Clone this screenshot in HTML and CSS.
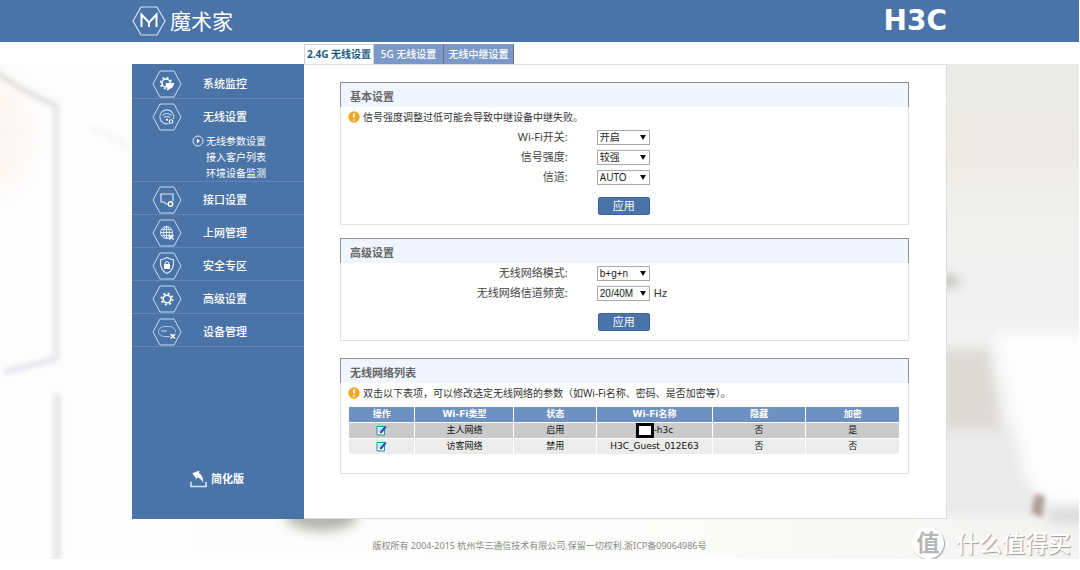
FILE: index.html
```html
<!DOCTYPE html>
<html lang="zh-CN">
<head>
<meta charset="utf-8">
<title>魔术家 - 无线设置</title>
<link rel="stylesheet" href="styles.css">
</head>
<body>
<svg class="defs" aria-hidden="true">
  <symbol id="hex" viewBox="0 0 30 28"><path d="M8 1h14l7 13-7 13H8L1 14z" fill="none" stroke="#c9dcf2" stroke-width="1"/></symbol>
  <symbol id="warn" viewBox="0 0 12 12"><circle cx="6" cy="6" r="5.7" fill="#f5a623"/><path d="M6 2.2v4.4M6 8.2v1.6" stroke="#fff" stroke-width="1.7"/></symbol>
  <symbol id="edit" viewBox="0 0 11 11"><path d="M1 1.5h7.5v8.500H1z" fill="#e8f6ff" stroke="#2c8f9b"/><path d="M2.500 4h3M2.500 6h2" stroke="#9cc"/><path d="M9.800 1.500L5 7.300" stroke="#1d54c4" stroke-width="2.200"/><path d="M3.800 8.600l.5-2 1.400 1.200z" fill="#222"/></symbol>
</svg>
<header class="topbar">
  <div class="topbar-inner">
    <div class="brand">
      <svg class="brand-mark" viewBox="0 0 34 30"><path d="M9 1h16l8 14-8 14H9L1 15z" fill="none" stroke="#d3e3f5" stroke-width="1.200"/><path d="M9.500 21V8.500l7.500 8 7.500-8V21M17 16v5" fill="none" stroke="#fff" stroke-width="2"/></svg>
      <span class="brand-name">魔术家</span>
    </div>
    <span class="maker">H3C</span>
  </div>
</header>
<div class="stage">
  <svg class="scene" viewBox="0 0 1079 495" preserveAspectRatio="none" aria-hidden="true">
    <defs>
      <filter id="b2" x="-50%" y="-50%" width="200%" height="200%"><feGaussianBlur stdDeviation="2.500"/></filter>
      <filter id="bv" filterUnits="userSpaceOnUse" x="-20" y="-20" width="180" height="540"><feGaussianBlur stdDeviation="2.500"/></filter>
      <filter id="b6" x="-50%" y="-50%" width="200%" height="200%"><feGaussianBlur stdDeviation="6"/></filter>
      <filter id="b14" x="-80%" y="-80%" width="260%" height="260%"><feGaussianBlur stdDeviation="14"/></filter>
      <linearGradient id="wall" x1="0" y1="0" x2="0" y2="1"><stop offset="0" stop-color="#ebebe9"/><stop offset=".2" stop-color="#edebe3"/><stop offset=".35" stop-color="#f0f0ee"/><stop offset=".65" stop-color="#f1f2f3"/><stop offset="1" stop-color="#f2f2f0"/></linearGradient>
      <linearGradient id="floor" x1="0" y1="0" x2="1" y2="0"><stop offset="0" stop-color="#fdfdfd"/><stop offset=".6" stop-color="#fcfcfb"/><stop offset="1" stop-color="#f3f3f1"/></linearGradient>
    </defs>
    <rect width="1079" height="495" fill="url(#floor)"/>
    <rect x="940" width="139" height="455" fill="url(#wall)"/>
    <ellipse cx="0" cy="70" rx="26" ry="56" fill="#fdf5ef" filter="url(#b14)"/>
    <g filter="url(#bv)" fill="none">
      <path d="M-4 8Q30 32 58 42" stroke="#dededc" stroke-width="5"/>
      <path d="M56 44V294" stroke="#e9e9eb" stroke-width="8"/>
      <path d="M4 308L56 295" stroke="#e2e4ec" stroke-width="5"/>
      <path d="M57 330V500" stroke="#e8e8ea" stroke-width="8"/>
      <path d="M92 62l40 22" stroke="#f6f6f4" stroke-width="5"/>
    </g>
    <ellipse cx="322" cy="452" rx="36" ry="15" fill="#b4b5aa" filter="url(#b6)"/>
    <g filter="url(#b6)">
      <path d="M940 285h48l14 80h-62z" fill="#dddad4"/>
      <path d="M940 365h80l40 85H940z" fill="#eaeaea"/>
      <path d="M1050 435h40v25h-40z" fill="#dcdcdc"/>
      <path d="M994 270h100v172h-40q-30-10-36-60z" fill="#fdfdfd"/>
      <ellipse cx="948" cy="217" rx="12" ry="4" fill="#a9a79c"/>
    </g>
    <path d="M1031 448l4-18 10 2-3 22z" fill="#b09f99" filter="url(#b2)"/>
  </svg>

  <nav class="tabs" aria-label="无线设置">
    <a class="tab tab-active" href="#">2.4G 无线设置</a>
    <a class="tab" href="#">5G 无线设置</a>
    <a class="tab" href="#">无线中继设置</a>
  </nav>

  <div class="shell">
    <nav class="sidebar" aria-label="主菜单">
      <ul class="menu">
        <li><a class="menu-link" href="#"><svg class="menu-icon" viewBox="0 0 30 28"><use href="#hex"/><circle cx="14" cy="13" r="4" fill="none" stroke="#fff" stroke-width="1.400"/><circle cx="14" cy="13" r="5.400" fill="none" stroke="#fff" stroke-width="1.800" stroke-dasharray="1.800 2.440"/><path d="M14 13h8q0 5-4.500 6-1 2-3 1l1-2-2-3z" fill="#fff"/></svg>系统监控</a></li>
        <li><a class="menu-link" href="#"><svg class="menu-icon" viewBox="0 0 30 28"><use href="#hex"/><g fill="none" stroke="#c9dcf2" stroke-width="1.100"><path d="M17 20.500A7 7 0 1 1 21.500 16M10.500 12.500q4.500-4 9 0M12.200 14.700q2.800-2.400 5.600 0"/><circle cx="19" cy="18.500" r="1.800" stroke="#fff"/></g><circle cx="15" cy="16.700" r="1.100" fill="#fff"/></svg>无线设置</a>
          <ul class="submenu">
            <li><a class="submenu-link" href="#"><svg class="submenu-dot" viewBox="0 0 12 12"><circle cx="6" cy="6" r="5" fill="none" stroke="#dce8f6"/><path d="M4.800 3.500L8 6 4.800 8.500z" fill="#fff"/></svg>无线参数设置</a></li>
            <li><a class="submenu-link" href="#">接入客户列表</a></li>
            <li><a class="submenu-link" href="#">环境设备监测</a></li>
          </ul>
        </li>
        <li><a class="menu-link" href="#"><svg class="menu-icon" viewBox="0 0 30 28"><use href="#hex"/><path d="M16 18h-2l-2-2H9V8h12v7" fill="none" stroke="#dce8f6" stroke-width="1.200"/><circle cx="18.500" cy="18" r="2.200" fill="none" stroke="#fff" stroke-width="1.400"/></svg>接口设置</a></li>
        <li><a class="menu-link" href="#"><svg class="menu-icon" viewBox="0 0 30 28"><use href="#hex"/><g fill="none" stroke="#dce8f6"><circle cx="14.500" cy="13.500" r="6"/><ellipse cx="14.500" cy="13.500" rx="2.800" ry="6"/><path d="M8.500 13.500h12M9.500 10.500h10M9.500 16.500h10M14.500 7.500v12"/></g><path d="M17 16l4.500 4.500M21.500 16L17 20.500" stroke="#fff" stroke-width="1.500"/></svg>上网管理</a></li>
        <li><a class="menu-link" href="#"><svg class="menu-icon" viewBox="0 0 30 28"><use href="#hex"/><path d="M15 5.500q3 2 6.500 2.200Q22.500 18 15 21.500 7.500 18 8.500 7.700 12 7.500 15 5.500z" fill="none" stroke="#dce8f6" stroke-width="1.100"/><path d="M12 12h6v5h-6z" fill="#fff"/><path d="M13.200 12v-1.300q1.800-2.600 3.600 0V12" fill="none" stroke="#fff"/></svg>安全专区</a></li>
        <li><a class="menu-link" href="#"><svg class="menu-icon" viewBox="0 0 30 28"><use href="#hex"/><circle cx="15" cy="14" r="3.800" fill="none" stroke="#fff" stroke-width="1.600"/><circle cx="15" cy="14" r="5.500" fill="none" stroke="#fff" stroke-width="2" stroke-dasharray="1.900 2.420"/></svg>高级设置</a></li>
        <li><a class="menu-link" href="#"><svg class="menu-icon" viewBox="0 0 30 28"><use href="#hex"/><path d="M18 18.500H12q-5.500-1-5.500-5t5.500-5h6q5.500 1 5.500 5v1" fill="none" stroke="#a9c4e4"/><path d="M9 13h6" stroke="#c9dcf2"/><path d="M18.500 16l4.500 4.500M23 16l-4.500 4.500" stroke="#fff" stroke-width="1.500"/></svg>设备管理</a></li>
      </ul>
      <a class="simple-link" href="#"><svg class="simple-icon" viewBox="0 0 18 19"><path d="M1 12v5h16v-5" fill="none" stroke="#dce8f6" stroke-width="1.600"/><path d="M2.500 3L10 0l-.5 2.500Q14 5 14 13 11.500 8 7.500 7L7 9.500z" fill="#fff"/></svg>简化版</a>
    </nav>

    <main class="content">
      <section class="panel">
        <h2 class="panel-title">基本设置</h2>
        <p class="notice"><svg class="notice-icon"><use href="#warn"/></svg>信号强度调整过低可能会导致中继设备中继失败。</p>
        <form class="form">
          <label for="wifi">Wi-Fi开关:</label><div class="field"><span class="pick"><select id="wifi"><option>开启</option><option>关闭</option></select></span></div>
          <label for="power">信号强度:</label><div class="field"><span class="pick"><select id="power"><option>较强</option><option>较弱</option></select></span></div>
          <label for="channel">信道:</label><div class="field"><span class="pick"><select id="channel"><option>AUTO</option></select></span></div>
          <button class="apply" type="button">应用</button>
        </form>
      </section>

      <section class="panel">
        <h2 class="panel-title">高级设置</h2>
        <form class="form form-latin">
          <label for="mode">无线网络模式:</label><div class="field"><span class="pick"><select id="mode"><option>b+g+n</option></select></span></div>
          <label for="band">无线网络信道频宽:</label><div class="field"><span class="pick"><select id="band"><option>20/40M</option><option>20M</option></select></span>Hz</div>
          <button class="apply" type="button">应用</button>
        </form>
      </section>

      <section class="panel panel-list">
        <h2 class="panel-title">无线网络列表</h2>
        <p class="notice"><svg class="notice-icon"><use href="#warn"/></svg>双击以下表项，可以修改选定无线网络的参数（如Wi-Fi名称、密码、是否加密等）。</p>
        <table class="networks">
          <thead><tr><th class="c-op">操作</th><th class="c-type">Wi-Fi类型</th><th class="c-state">状态</th><th class="c-name">Wi-Fi名称</th><th class="c-flag">隐藏</th><th class="c-flag">加密</th></tr></thead>
          <tbody>
            <tr class="selected"><td><button class="edit" type="button" aria-label="编辑"><svg><use href="#edit"/></svg></button></td><td>主人网络</td><td>启用</td><td><span class="name"><span class="mask"></span>-h3c</span></td><td>否</td><td>是</td></tr>
            <tr><td><button class="edit" type="button" aria-label="编辑"><svg><use href="#edit"/></svg></button></td><td>访客网络</td><td>禁用</td><td>H3C_Guest_012E63</td><td>否</td><td>否</td></tr>
          </tbody>
        </table>
      </section>
    </main>
  </div>

  <footer class="footer">版权所有 2004-2015 杭州华三通信技术有限公司.保留一切权利.浙ICP备09064986号</footer>
  <div class="watermark"><span class="watermark-badge">值</span>什么值得买</div>
</div>
</body>
</html>
```
FILE: styles.css
```css
* { box-sizing: border-box; }

body {
  margin: 0;
  padding-right: 1px;
  background: #fff;
  color: #333;
  font: 11px/20px "Noto Sans", "Noto Sans CJK SC", sans-serif;
}

a { color: inherit; text-decoration: none; }
ul { list-style: none; margin: 0; padding: 0; }
.defs { display: none; }

.topbar { background: #4a73a7; color: #fff; }
.topbar-inner {
  display: flex;
  align-items: center;
  justify-content: space-between;
  max-width: 815px;
  height: 42px;
  margin: 0 auto;
}
.brand { display: flex; align-items: center; gap: 4px; }
.brand-mark { width: 34px; height: 30px; }
.brand-name { font-size: 21px; line-height: 30px; }
.maker { font: bold 28px/42px "DejaVu Sans", sans-serif; }

.stage { position: relative; }
.scene {
  position: absolute;
  z-index: -1;
  top: 22px;
  left: 0;
  width: 100%;
  height: calc(100% - 22px);
}

.tabs {
  display: flex;
  max-width: 815px;
  margin: 0 auto;
  padding: 2px 0 0 172px;
}
.tab {
  width: 70px;
  border-right: 1px solid #6a6f80;
  background: #7b98c8;
  color: #fff;
  font-size: 10px;
  font-weight: 500;
  text-align: center;
  white-space: nowrap;
}
.tab-active {
  border: 1px solid #ccd3dc;
  border-bottom: 0;
  background: #fff;
  color: #1a5c82;
  font-weight: bold;
  line-height: 19px;
}

.shell {
  display: flex;
  max-width: 815px;
  min-height: 455px;
  margin: 0 auto;
}
.sidebar {
  display: flex;
  flex: 0 0 172px;
  flex-direction: column;
  padding-top: 2px;
  background: #4a73a7;
  color: #fff;
}
.menu > li { border-bottom: 1px solid #5f86b8; }
.menu-link {
  display: flex;
  align-items: center;
  gap: 21px;
  height: 32px;
  padding: 4px 0 0 20px;
  font-size: 11px;
  font-weight: 500;
}
.menu-icon { width: 30px; height: 28px; }
.submenu { padding-top: 2px; font-size: 10px; line-height: 16px; }
.submenu-link {
  display: flex;
  align-items: center;
  justify-content: flex-end;
  gap: 2px;
  margin-right: 38px;
  white-space: nowrap;
}
.submenu-dot { width: 12px; height: 12px; }
.simple-link {
  display: flex;
  align-items: center;
  gap: 4px;
  margin-top: auto;
  padding: 0 0 30px 58px;
  font-weight: bold;
}
.simple-icon { width: 17px; height: 19px; }

.content {
  display: flex;
  flex: 1;
  flex-direction: column;
  gap: 13px;
  min-width: 0;
  padding: 17px 37px 0 36px;
  border: 1px solid #ddd;
  border-left: 0;
  background: #fff;
}

.panel { border: 1px solid #e2e2e2; border-top: 0; }
.panel-title {
  margin: 0 -1px;
  padding: 4px 9px 1px;
  border: 1px solid #8d8d93;
  border-bottom: 0;
  background: #f0f5ff;
  color: #666;
  font-size: 11px;
  font-weight: bold;
  line-height: 19px;
}
.panel-list { min-height: 116px; margin-top: 4px; }

.notice {
  display: flex;
  align-items: center;
  gap: 3px;
  margin: 0;
  padding-left: 7px;
  font-size: 10px;
}
.notice-icon { width: 12px; height: 12px; }

.form {
  display: grid;
  grid-template-columns: 40% 1fr;
  column-gap: 29px;
  padding-bottom: 9px;
}
.form label { text-align: right; color: #444; }
.field { display: flex; align-items: center; gap: 4px; }
.form-latin .field, .form-latin select { font-family: "Liberation Sans", sans-serif; }
.pick { position: relative; display: flex; width: 53px; }
.pick::after {
  position: absolute;
  top: 5px;
  right: 4px;
  border: solid transparent;
  border-width: 5px 3px 0;
  border-top-color: #111;
  content: "";
  pointer-events: none;
}
.pick select {
  width: 100%;
  height: 15px;
  padding: 0 2px;
  border: 1px solid #a9a9a9;
  border-radius: 0;
  background: #fff;
  color: #222;
  font-family: "Noto Sans", "Noto Sans CJK SC", sans-serif;
  font-size: 10px;
  line-height: 13px;
  appearance: none;
}
.form-latin .pick select { font-family: "Liberation Sans", sans-serif; }
.apply {
  grid-column: 2;
  width: 52px;
  height: 18px;
  margin: 10px 0 0 1px;
  padding: 0;
  border: 1px solid #3c659b;
  border-radius: 2px;
  background: #4a73a7;
  color: #fff;
  font: 11px/16px "Noto Sans", "Noto Sans CJK SC", sans-serif;
}

.networks {
  width: calc(100% - 15px);
  margin: 3px 7px 0;
  border-spacing: 1px;
  table-layout: fixed;
  color: #111;
  font: 9px/15px "DejaVu Sans", "Noto Sans CJK SC", sans-serif;
  text-align: center;
}
.networks th { padding: 0; background: #6d92c2; color: #fff; }
.networks td { height: 15px; padding: 0; background: #ececec; }
.networks .selected td { background: #cacaca; }
.c-op { width: 12%; }
.c-type { width: 18%; }
.c-state { width: 15%; }
.c-name { width: 21%; }
.c-flag { width: 17%; }
.edit { display: block; width: 11px; height: 11px; margin: 0 auto; padding: 0; border: 0; background: none; }
.edit svg { display: block; width: 11px; height: 11px; }
.name { display: flex; justify-content: center; height: 15px; }
.mask { width: 18px; height: 15px; border: 3px solid #000; background: #fff; }

.footer {
  padding: 17px 0 3px;
  color: #888;
  font-size: 9px;
  text-align: center;
}
.watermark {
  position: absolute;
  right: 8px;
  bottom: 0;
  display: flex;
  align-items: center;
  gap: 12px;
  color: #fff;
  font-size: 23px;
  font-weight: 500;
  line-height: 32px;
  text-shadow: 1px 1px 1px #999;
}
.watermark-badge {
  width: 32px;
  height: 32px;
  border-radius: 50%;
  background: #fff;
  box-shadow: 1px 1px 1px #aaa;
  color: #b5b5b5;
  font-weight: bold;
  line-height: 30px;
  text-align: center;
  text-shadow: none;
}
```
